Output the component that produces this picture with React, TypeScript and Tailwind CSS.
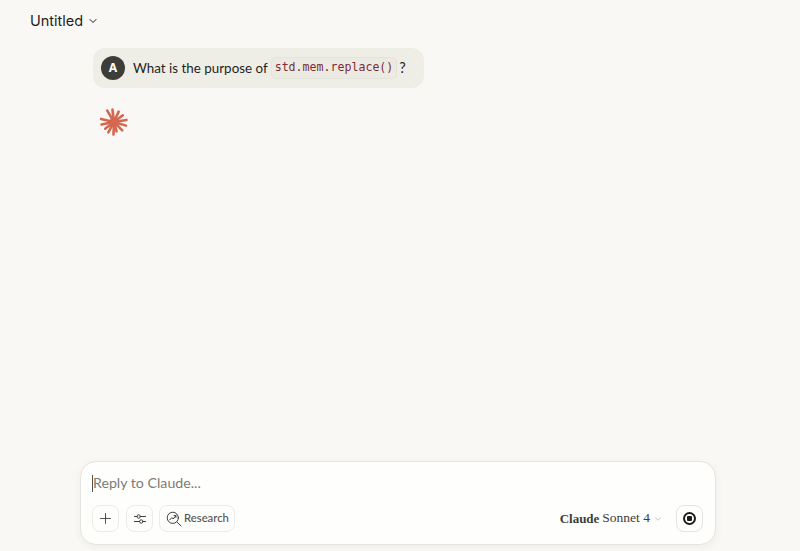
import { ChevronDown, Plus } from 'lucide-react';

const rays = [
  [12, 1.5], [18, 3.5], [22, 7], [25.5, 11.5], [25, 17], [21.5, 21.5], [16, 22.5], [13, 25.5], [8, 23.5], [5, 20], [1.5, 16], [1, 10.5], [7, 2.5],
];

function Spark() {
  return (
    <svg width="28" height="28" viewBox="0 0 27 27" fill="none" stroke="#d4674f" strokeWidth="2.5" strokeLinecap="round">
      {rays.map(([x, y]) => (
        <line key={`${x}-${y}`} x1="13.5" y1="13.5" x2={x} y2={y} />
      ))}
      <circle cx="13.5" cy="13.5" r="4.5" fill="#d4674f" stroke="none" />
    </svg>
  );
}

function SlidersIcon() {
  return (
    <svg width="14" height="14" viewBox="0 0 14 14" fill="none" stroke="#3d3d3a" strokeWidth="1" strokeLinecap="round">
      <path d="M1.5 4.5H4M7.5 4.5h5M1.5 9.5h5M10 9.5h2.5" />
      <circle cx="5.7" cy="4.5" r="1.7" />
      <circle cx="8.3" cy="9.5" r="1.7" />
    </svg>
  );
}

function ResearchIcon() {
  return (
    <svg width="16" height="16" viewBox="0 0 16 16" fill="none" stroke="#3d3d3a" strokeWidth="1" strokeLinecap="round" strokeLinejoin="round">
      <circle cx="6.8" cy="6.8" r="5.6" />
      <path d="M11 11 15 15" />
      <path d="M3.8 8.8 5.8 6.6 7.2 8 9.8 4.8M8 4.6h1.9v1.9" />
    </svg>
  );
}

export default function App() {
  return (
    <div className="h-[551px] flex flex-col bg-[#faf8f5] font-['Inter',sans-serif] text-[#1f1e1d] overflow-hidden">
      <header className="flex items-center gap-1 pl-[30px] pt-[11px] h-[30px]">
        <span className="text-[14.5px] leading-5">Untitled</span>
        <ChevronDown className="w-3 h-3" strokeWidth={2} />
      </header>

      <main className="flex-1 pl-[93px] pt-[18px]">
        <div className="inline-flex items-center w-[331px] h-10 pl-2 rounded-xl bg-[#efeee6]">
          <div className="w-6 h-6 rounded-full bg-[#3d3d3a] text-white text-[12px] font-bold flex items-center justify-center shrink-0">
            A
          </div>
          <p className="ml-2 font-['Lato',sans-serif] text-[13.4px] text-[#1f1e1d] whitespace-nowrap">What is the purpose of</p>
          <code className="ml-[3px] px-[3px] py-[1px] rounded-[5px] border border-[#e4e3da] bg-[#ecebe3] text-[#7b2c36] text-[11.6px] font-['DejaVu_Sans_Mono',monospace]">
            std.mem.replace()
          </code>
          <span className="ml-[2px] font-['Lato',sans-serif] text-[14.5px]">?</span>
        </div>
        <div className="mt-[20px] ml-[7px]">
          <Spark />
        </div>
      </main>

      <div className="mx-20 mb-[6px] w-[636px] h-[84px] bg-[#fefefd] border border-[#e6e4df] rounded-2xl shadow-[0_2px_10px_rgba(0,0,0,0.05)] flex flex-col pl-[11px] pr-[12px]">
        <div className="flex items-center h-[41px] pt-[1px]">
          <span className="w-px h-[17px] bg-[#55534e]" />
          <span className="font-['Lato',sans-serif] text-[14.2px] text-[#7d7b74]">Reply to Claude...</span>
        </div>
        <div className="flex items-center gap-[7px] mt-[2px]">
          <button className="w-[27px] h-[27px] rounded-lg border border-[#ecebe7] flex items-center justify-center text-[#3d3d3a]">
            <Plus className="w-[17px] h-[17px]" strokeWidth={1.25} />
          </button>
          <button className="w-[27px] h-[27px] rounded-lg border border-[#ecebe7] flex items-center justify-center">
            <SlidersIcon />
          </button>
          <button className="ml-[-1px] w-[76px] h-[27px] pl-[6px] rounded-lg border border-[#ecebe7] flex items-center gap-[2px] font-['Lato',sans-serif] text-[11.3px] text-[#55534e] font-medium">
            <ResearchIcon />
            Research
          </button>
          <div className="ml-auto flex items-center gap-[3px] font-['Liberation_Serif',serif] text-[#3d3d3a]">
            <span className="text-[13px] font-bold">Claude</span>
            <span className="text-[13.5px]">Sonnet 4</span>
            <ChevronDown className="w-[10px] h-[10px] text-[#8a8880]" strokeWidth={1.25} />
          </div>
          <button className="ml-[6px] w-[27px] h-[27px] rounded-lg border border-[#e6e4df] flex items-center justify-center">
            <span className="w-[13px] h-[13px] rounded-full border-2 border-[#1f1e1d] flex items-center justify-center">
              <span className="w-[5px] h-[5px] rounded-[1px] bg-[#1f1e1d]" />
            </span>
          </button>
        </div>
      </div>
    </div>
  );
}
